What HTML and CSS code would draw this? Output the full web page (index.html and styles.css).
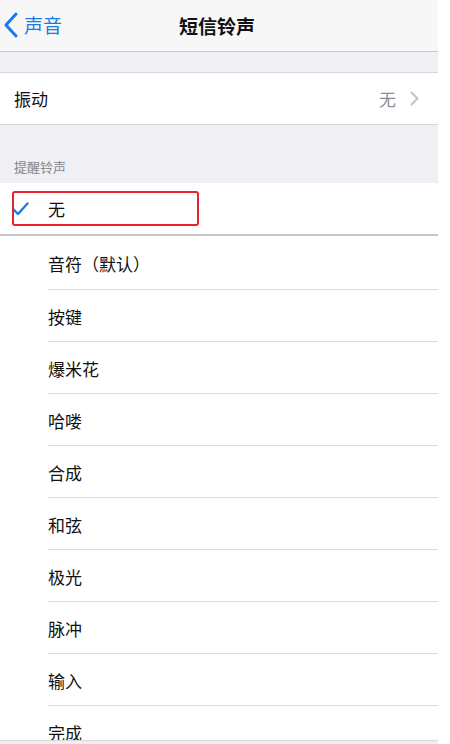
FILE: index.html
```html
<!DOCTYPE html>
<html lang="zh-CN">
<head>
    <meta charset="UTF-8">
    <meta name="viewport" content="width=device-width, initial-scale=1.0">
    <title>短信铃声</title>
    <link rel="stylesheet" href="styles.css">
</head>
<body>
    <div class="screen">
        <header class="navbar">
            <div class="back">
                <svg width="16" height="26" viewBox="0 0 16 26">
                    <path d="M13 2 L3 13 L13 24" fill="none" stroke="#1b7ae6" stroke-width="3" stroke-linecap="round" stroke-linejoin="round"/>
                </svg>
                <span>声音</span>
            </div>
            <h1>短信铃声</h1>
        </header>

        <div class="gap"></div>

        <div class="group">
            <div class="row">
                <span class="label">振动</span>
                <span class="detail">无
                    <svg width="9" height="15" viewBox="0 0 9 15">
                        <path d="M1.5 1.5 L7.5 7.5 L1.5 13.5" fill="none" stroke="#c4c4c8" stroke-width="2" stroke-linecap="round" stroke-linejoin="round"/>
                    </svg>
                </span>
            </div>
        </div>

        <div class="section-title">提醒铃声</div>

        <div class="selected-row">
            <div class="highlight"></div>
            <svg class="check" width="17" height="14" viewBox="0 0 17 14">
                <path d="M1.5 7.5 L6 12 L15.5 1.5" fill="none" stroke="#1b7ae6" stroke-width="2.4" stroke-linecap="round" stroke-linejoin="round"/>
            </svg>
            <span class="label">无</span>
        </div>

        <ul class="tones">
            <li>音符（默认）</li>
            <li>按键</li>
            <li>爆米花</li>
            <li>哈喽</li>
            <li>合成</li>
            <li>和弦</li>
            <li>极光</li>
            <li>脉冲</li>
            <li>输入</li>
            <li>完成</li>
        </ul>
    </div>
    <div class="bottom-bar"></div>
</body>
</html>
```

FILE: styles.css
```css
body {
    margin: 0;
    padding: 0;
    background-color: #ffffff;
    font-family: "Noto Sans CJK SC", "Noto Sans", sans-serif;
    color: #111111;
    height: 744px;
    overflow: hidden;
}

.screen {
    width: 438px;
    background-color: #ffffff;
}

.navbar {
    height: 51px;
    background-color: #f7f7f8;
    border-bottom: 1px solid #c9c9cd;
    display: flex;
    align-items: center;
    justify-content: center;
    position: relative;
}

.navbar h1 {
    margin: 0 0 0 -4px;
    font-size: 19px;
    font-weight: 700;
    color: #111111;
}

.back {
    position: absolute;
    left: 3px;
    top: 12px;
    display: flex;
    align-items: center;
    gap: 5px;
    color: #1b7ae6;
    font-size: 19px;
}

.back span {
    line-height: 26px;
}

.gap {
    height: 20px;
    background-color: #efeff4;
}

.group {
    border-top: 1px solid #d6d6da;
    border-bottom: 1px solid #d6d6da;
}

.row {
    height: 51px;
    display: flex;
    align-items: center;
    justify-content: space-between;
    padding: 0 19px 0 14px;
    font-size: 17px;
}

.detail {
    display: flex;
    align-items: center;
    gap: 14px;
    color: #8e8e93;
}

.section-title {
    height: 58px;
    background-color: #efeff4;
    font-size: 13px;
    color: #87878c;
    padding-left: 14px;
    display: flex;
    align-items: flex-end;
    box-sizing: border-box;
    padding-bottom: 7px;
}

.selected-row {
    height: 51px;
    display: flex;
    align-items: center;
    font-size: 17px;
    border-bottom: 2px solid #c8c8cc;
    position: relative;
}

.selected-row .check {
    margin-left: 12px;
    margin-right: 19px;
}

.highlight {
    position: absolute;
    left: 12px;
    top: 8px;
    width: 183px;
    height: 31px;
    border: 2px solid #e3262b;
    border-radius: 3px;
}

.tones {
    list-style: none;
    margin: 0;
    padding: 0 0 0 48px;
}

.tones li {
    height: 52px;
    display: flex;
    align-items: center;
    font-size: 17px;
    border-bottom: 1px solid #dcdce0;
    padding-top: 1px;
    box-sizing: border-box;
}

.tones li:first-child {
    height: 54px;
    padding-top: 2px;
}

.bottom-bar {
    position: fixed;
    left: 0;
    bottom: 0;
    width: 438px;
    height: 3px;
    background-color: #efeff2;
    border-top: 1px solid #d8d8dc;
}
```
